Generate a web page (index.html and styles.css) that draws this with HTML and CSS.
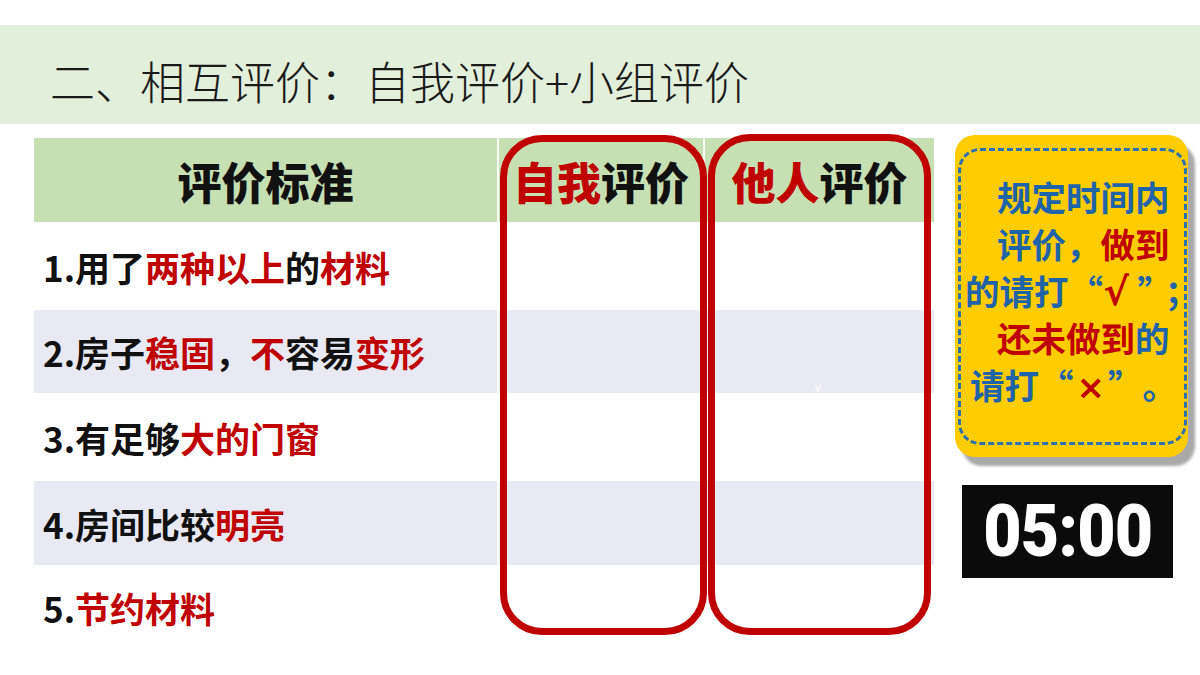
FILE: index.html
```html
<!DOCTYPE html>
<html lang="zh-CN">
<head>
<meta charset="utf-8">
<link rel="stylesheet" href="styles.css">
</head>
<body>
<div class="slide">
  <header class="topbar">
    <h1 class="title">二、相互评价：自我评价+小组评价</h1>
  </header>
  <div class="main">
    <div class="table-wrap">
      <div class="table">
        <div class="cell head c1">评价标准</div>
        <div class="cell head c2"><span class="red">自我</span>评价</div>
        <div class="cell head c3"><span class="red">他人</span>评价</div>

        <div class="cell r1 c1">1.用了<span class="red">两种以上</span>的<span class="red">材料</span></div>
        <div class="cell r1 c2"></div>
        <div class="cell r1 c3"></div>

        <div class="cell r2 alt c1">2.房子<span class="red">稳固</span>，<span class="red">不</span>容易<span class="red">变形</span></div>
        <div class="cell r2 alt c2"></div>
        <div class="cell r2 alt c3"></div>

        <div class="cell r3 c1">3.有足够<span class="red">大的门窗</span></div>
        <div class="cell r3 c2"></div>
        <div class="cell r3 c3"></div>

        <div class="cell r4 alt c1">4.房间比较<span class="red">明亮</span></div>
        <div class="cell r4 alt c2"></div>
        <div class="cell r4 alt c3"></div>

        <div class="cell r5 c1">5.<span class="red">节约材料</span></div>
        <div class="cell r5 c2"></div>
        <div class="cell r5 c3"></div>
      </div>
      <div class="ring ring-self"></div>
      <div class="ring ring-other"></div>
      <span class="stray">v</span>
    </div>
    <aside class="side">
      <div class="card">
        <div class="dash">
          <div class="line p1">规定时间内</div>
          <div class="line p1">评价，<span class="red">做到</span></div>
          <div class="line p3">的请打<span class="q ql">“</span><span class="sym red chk">√</span><span class="tail"><span class="gap">”</span>；</span></div>
          <div class="line p1"><span class="red">还未做到</span>的</div>
          <div class="line p5">请打<span class="q ql">“</span><span class="sym red">×</span><span class="q qr">”</span><span class="fw">。</span></div>
        </div>
      </div>
      <div class="timer"><span class="digits">05:00</span></div>
    </aside>
  </div>
</div>
</body>
</html>
```

FILE: styles.css
```css
* { box-sizing: border-box; margin: 0; padding: 0; }
html, body { width: 1200px; height: 675px; background: #ffffff; overflow: hidden; }
body { font-family: "Noto Sans CJK SC", "Noto Sans", sans-serif; }

.slide { width: 1200px; height: 675px; padding-top: 25px; }

.topbar {
  height: 99px;
  background: #e2efda;
  display: flex;
  align-items: center;
  padding-left: 50px;
}
.title {
  font-family: "Noto Sans CJK SC", sans-serif;
  font-weight: 300;
  font-size: 45px;
  color: #1a1a1a;
  line-height: 1;
  margin-top: 12px;
}

.main { display: flex; align-items: flex-start; }

.table-wrap { position: relative; margin-left: 34px; margin-top: 14px; width: 900px; }

.table {
  display: grid;
  grid-template-columns: 463px 206px 231px;
  grid-template-rows: 84px 88px 83px 88px 84px 85px;
}
.cell { display: flex; align-items: center; background: #ffffff; }
.cell.alt { background: #e8e9f3; }
.cell.c2, .cell.c3 { border-left: 2px solid rgba(255,255,255,0.9); }
.cell.head {
  background: #c6e0b4;
  justify-content: center;
  font-size: 44px;
  font-weight: 900;
  color: #111;
  padding-top: 2px;
}
.cell.c1:not(.head) {
  padding-left: 9px;
  font-size: 35px;
  font-weight: 700;
  color: #111;
}
.red { color: #c00000; }

.ring {
  position: absolute;
  border: 7px solid #c00000;
  border-radius: 42px;
}
.ring-self { left: 466px; top: -3px; width: 207px; height: 500px; }
.ring-other { left: 674px; top: -4px; width: 223px; height: 501px; }

.stray {
  position: absolute;
  left: 781px; top: 243px;
  font-size: 12px; color: #ffffff;
  font-family: "Liberation Sans", sans-serif;
}

.side { margin-left: 21px; margin-top: 11px; }

.card {
  width: 233px;
  height: 322px;
  background: #ffcc00;
  border-radius: 20px;
  box-shadow: 7px 9px 3px #a9a9a9;
  padding: 13px 1px 12px 3px;
}
.dash {
  height: 100%;
  border: 3px dashed #2e6fae;
  border-radius: 22px;
  padding-top: 22px;
  color: #1f63a8;
  font-weight: 700;
  font-size: 34.5px;
}
.line { height: 47px; line-height: 47px; white-space: nowrap; }
.p1 { padding-left: 36px; }
.p3 { padding-left: 4px; }
.p5 { padding-left: 9px; }

.q, .sym, .fw { display: inline-block; width: 34.5px; }
.ql { text-align: right; }
.qr { text-align: left; }
.fw { text-align: center; }
.tail { display: inline-block; }
.gap { letter-spacing: 10px; }
.sym {
  text-align: center;
  font-family: "DejaVu Sans", sans-serif;
  font-weight: 700;
  font-size: 34px;
}
.chk { font-size: 38px; transform: translateX(-4px); }

.timer {
  margin-top: 28px;
  margin-left: 7px;
  width: 211px;
  height: 93px;
  background: #0b0b0b;
  color: #ffffff;
  font-family: Roboto, "Liberation Sans", sans-serif;
  font-weight: 900;
  font-size: 72px;
  line-height: 93px;
  text-align: center;
}
.digits { display: inline-block; transform: scaleX(0.92); letter-spacing: -1px; }
```
